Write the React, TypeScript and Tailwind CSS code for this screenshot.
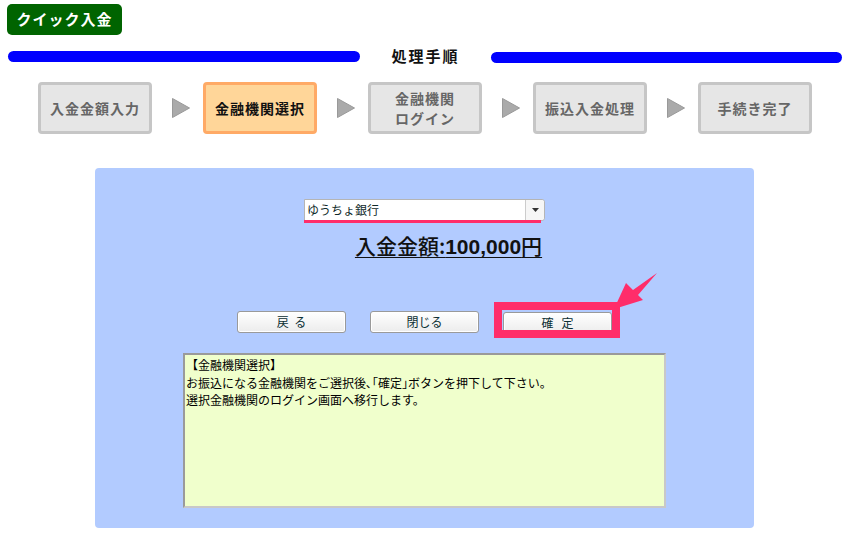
import React from "react";

const jp = { fontFamily: '"Noto Sans CJK JP", "Noto Sans", sans-serif' };

const steps = [
  { label: ["入金金額入力"], active: false },
  { label: ["金融機関選択"], active: true },
  { label: ["金融機関", "ログイン"], active: false },
  { label: ["振込入金処理"], active: false },
  { label: ["手続き完了"], active: false },
];

function StepArrow() {
  return (
    <svg width="18" height="20" viewBox="0 0 18 20" className="ml-[20px] mr-[13px] shrink-0">
      <polygon points="0.5,0.5 17.5,10 0.5,19.5" fill="#aaaaaa" stroke="#999999" strokeWidth="1" />
    </svg>
  );
}

function Step({ label, active }: { label: string[]; active: boolean }) {
  return (
    <div
      className={
        active
          ? "w-[114px] h-[52px] shrink-0 rounded-[4px] border-[3px] border-[#ffaa66] bg-[#ffd699] flex flex-col items-center justify-center text-[14px] font-bold tracking-[1px] leading-[20px] text-[#111111]"
          : "w-[114px] h-[52px] shrink-0 rounded-[4px] border-[3px] border-[#c6c6c6] bg-[#e6e6e6] flex flex-col items-center justify-center text-[14px] font-bold tracking-[1px] leading-[20px] text-[#666666]"
      }
    >
      {label.map((l) => (
        <span key={l}>{l}</span>
      ))}
    </div>
  );
}

function Btn({ children }: { children: React.ReactNode }) {
  return (
    <button className="w-[109px] h-[22px] rounded-[3px] border border-[#9a9a9a] bg-gradient-to-b from-white to-[#ececec] text-[12px] leading-none text-[#0b2f33] shadow-[inset_0_0_0_1px_#ffffff]">
      {children}
    </button>
  );
}

export default function App() {
  return (
    <div className="w-[858px] h-[544px] bg-white overflow-hidden relative" style={jp}>
      <div className="pt-[4px] pl-[7px]">
        <div className="w-[115px] h-[31px] rounded-[5px] bg-[#006400] text-white text-[15px] font-bold flex items-center justify-center tracking-[1px]">
          クイック入金
        </div>
      </div>

      <div className="flex items-center pl-[8px] pr-[16px] mt-[14px] h-[14px]">
        <div className="w-[352px] h-[11px] rounded-full bg-[#0000ff]" />
        <div className="flex-1 text-center text-[15px] font-bold tracking-[2px] text-[#111111]">処理手順</div>
        <div className="w-[351px] h-[11px] rounded-full bg-[#0000ff] mt-[3px]" />
      </div>

      <div className="flex items-center pl-[38px] mt-[19px]">
        {steps.map((s, i) => (
          <React.Fragment key={i}>
            {i > 0 && <StepArrow />}
            <Step label={s.label} active={s.active} />
          </React.Fragment>
        ))}
      </div>

      <div className="ml-[95px] mt-[34px] w-[659px] h-[360px] rounded-[4px] bg-[#b2cbff] flex flex-col items-center pt-[31px] relative">
        <div className="relative w-[241px] h-[22px] bg-white border border-[#b5b5b5] rounded-r-[3px] flex items-center">
          <span className="pl-[2px] text-[12px] text-[#102a2a] flex-1">ゆうちょ銀行</span>
          <div className="w-[19px] h-full border-l border-[#cccccc] bg-[#f6f6f6] flex items-center justify-center rounded-r-[3px]">
            <svg width="7" height="4" viewBox="0 0 7 4">
              <polygon points="0,0 7,0 3.5,4" fill="#333333" />
            </svg>
          </div>
          <div className="absolute left-[-1px] bottom-[-3px] w-[237px] h-[3px] bg-[#ff2d6a]" />
        </div>

        <div className="mt-[11px] pl-[48px] text-[21px] leading-[27px] text-[#111111] underline underline-offset-[3px] decoration-1">
          <span className="font-medium">入金金額:</span>
          <span className="font-bold" style={{ fontFamily: '"Liberation Sans", "Noto Sans CJK JP", sans-serif' }}>100,000</span>
          <span className="font-medium">円</span>
        </div>

        <div className="mt-[49px] flex items-center gap-[24px]">
          <Btn>戻&nbsp;&nbsp;る</Btn>
          <Btn>閉じる</Btn>
          <div className="relative">
            <Btn>確&nbsp;&nbsp;&nbsp;定</Btn>
            <div className="absolute -left-[9px] -right-[8px] -top-[7px] -bottom-[4px] border-[8px] border-[#ff2d6a]" />
            <svg width="52" height="45" viewBox="0 0 52 45" className="absolute left-[105px] top-[-41px]">
              <polygon points="6,41 18,15 25,22 49,5 30,27 35,32" fill="#ff2d6a" />
            </svg>
          </div>
        </div>

        <div className="mt-[19px] w-[483px] h-[155px] bg-[#f0ffcc] border-[2px] border-t-[#9a9a9a] border-l-[#9a9a9a] border-r-[#c8c8c8] border-b-[#c8c8c8] px-[1px] pt-[1px] text-[12px] leading-[17.5px] text-black">
          <div>【金融機関選択】</div>
          <div>お振込になる金融機関をご選択後､｢確定｣ボタンを押下して下さい。</div>
          <div>選択金融機関のログイン画面へ移行します。</div>
        </div>
      </div>
    </div>
  );
}
